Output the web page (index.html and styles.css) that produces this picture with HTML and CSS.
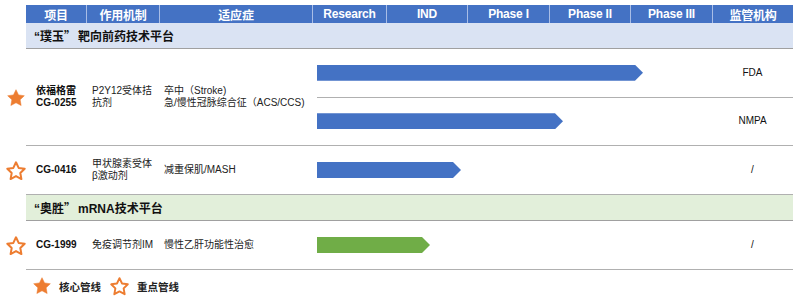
FILE: index.html
```html
<!DOCTYPE html>
<html lang="zh">
<head>
<meta charset="utf-8">
<link rel="stylesheet" href="styles.css">
</head>
<body>
<div class="sheet">
  <div class="head">
    <div class="hcell">项目</div>
    <div class="hcell">作用机制</div>
    <div class="hcell">适应症</div>
    <div class="hcell">Research</div>
    <div class="hcell">IND</div>
    <div class="hcell">Phase I</div>
    <div class="hcell">Phase II</div>
    <div class="hcell">Phase III</div>
    <div class="hcell">监管机构</div>
  </div>

  <div class="platform platform-blue">“璞玉<span class="cjk-quote">”</span>靶向前药技术平台</div>

  <div class="product product-tall">
    <div class="gutter">
      <svg class="star star-filled" width="20" height="20" viewBox="0 0 24 24"><polygon points="12,2 15.09,8.26 22,9.27 17,14.14 18.18,21.02 12,17.77 5.82,21.02 7,14.14 2,9.27 8.91,8.26"/></svg>
    </div>
    <div class="cells">
      <div class="name">依福格雷<br>CG-0255</div>
      <div class="mech">P2Y12受体拮<br>抗剂</div>
      <div class="ind">卒中（Stroke)<br>急/慢性冠脉综合征（ACS/CCS)</div>
      <div class="tracks">
        <div class="track">
          <div class="lane"><div class="bar bar-blue" style="width:326px"></div></div>
          <div class="reg">FDA</div>
        </div>
        <div class="track">
          <div class="lane"><div class="bar bar-blue" style="width:246px"></div></div>
          <div class="reg">NMPA</div>
        </div>
      </div>
    </div>
  </div>

  <div class="product">
    <div class="gutter">
      <svg class="star star-outline" width="22" height="22" viewBox="0 0 24 24"><polygon points="12,2.5 14.9,8.6 21.5,9.5 16.7,14.2 17.9,20.8 12,17.6 6.1,20.8 7.3,14.2 2.5,9.5 9.1,8.6"/></svg>
    </div>
    <div class="cells">
      <div class="name">CG-0416</div>
      <div class="mech">甲状腺素受体<br>β激动剂</div>
      <div class="ind">减重保肌/MASH</div>
      <div class="tracks">
        <div class="track">
          <div class="lane"><div class="bar bar-blue" style="width:144px"></div></div>
          <div class="reg">/</div>
        </div>
      </div>
    </div>
  </div>

  <div class="platform platform-green">“奥胜<span class="cjk-quote">”</span>mRNA技术平台</div>

  <div class="product">
    <div class="gutter">
      <svg class="star star-outline" width="22" height="22" viewBox="0 0 24 24"><polygon points="12,2.5 14.9,8.6 21.5,9.5 16.7,14.2 17.9,20.8 12,17.6 6.1,20.8 7.3,14.2 2.5,9.5 9.1,8.6"/></svg>
    </div>
    <div class="cells">
      <div class="name">CG-1999</div>
      <div class="mech">免疫调节剂IM</div>
      <div class="ind">慢性乙肝功能性治愈</div>
      <div class="tracks">
        <div class="track">
          <div class="lane"><div class="bar bar-green" style="width:113px"></div></div>
          <div class="reg">/</div>
        </div>
      </div>
    </div>
  </div>

  <div class="legend">
    <svg class="star star-filled" width="20" height="20" viewBox="0 0 24 24"><polygon points="12,2 15.09,8.26 22,9.27 17,14.14 18.18,21.02 12,17.77 5.82,21.02 7,14.14 2,9.27 8.91,8.26"/></svg>
    <span class="legend-text">核心管线</span>
    <svg class="star star-outline" width="21" height="21" viewBox="0 0 24 24"><polygon points="12,2.5 14.9,8.6 21.5,9.5 16.7,14.2 17.9,20.8 12,17.6 6.1,20.8 7.3,14.2 2.5,9.5 9.1,8.6"/></svg>
    <span class="legend-text">重点管线</span>
  </div>
</div>
</body>
</html>
```

FILE: styles.css
```css
* { box-sizing: border-box; }

html, body {
  margin: 0;
  padding: 0;
  background: #ffffff;
}

body {
  font-family: "Liberation Sans", Arial, "Noto Sans CJK SC", sans-serif;
  color: #111111;
  width: 800px;
  height: 303px;
  overflow: hidden;
}

.sheet {
  width: 793px;
  padding-top: 5px;
}

.head {
  margin-left: 26px;
  height: 18px;
  display: grid;
  grid-template-columns: 60px 73px 153px 74px 81px 82px 81px 82px 81px;
  background: #4472c4;
}

.hcell {
  color: #ffffff;
  font-weight: bold;
  font-size: 12px;
  display: flex;
  align-items: center;
  justify-content: center;
  border-left: 1px solid #a9bde6;
  letter-spacing: -0.2px;
}

.hcell:first-child { border-left: none; }

.platform {
  margin-left: 26px;
  height: 26px;
  display: flex;
  align-items: center;
  padding-left: 8px;
  font-size: 12px;
  font-weight: bold;
  color: #111111;
  border-bottom: 1px solid #a0a0a0;
}

.cjk-quote {
  font-family: "Noto Sans CJK SC", sans-serif;
  margin-right: 2px;
}

.platform-blue { background: #dae3f3; }
.platform-green { background: #e2efda; }

.product {
  display: flex;
  height: 49px;
}

.product-tall { height: 97px; }

.gutter {
  width: 26px;
  flex: none;
  display: flex;
  align-items: center;
  justify-content: center;
  padding-left: 5px;
}

.cells {
  flex: 1;
  display: grid;
  grid-template-columns: 60px 73px 153px 481px;
  border-bottom: 1px solid #b0b0b0;
  font-size: 10px;
  line-height: 12px;
}

.name {
  align-self: center;
  padding-left: 10px;
  font-weight: bold;
}

.mech {
  align-self: center;
  padding-left: 6px;
  color: #222222;
}

.ind {
  align-self: center;
  padding-left: 5px;
  color: #222222;
}

.tracks {
  display: flex;
  flex-direction: column;
  padding-left: 5px;
}

.track {
  flex: 1;
  display: grid;
  grid-template-columns: 395px 81px;
  align-items: center;
}

.track + .track { border-top: 1px solid #b0b0b0; }

.lane { display: flex; align-items: center; }

.bar {
  height: 16px;
  clip-path: polygon(0 0, calc(100% - 8px) 0, 100% 50%, calc(100% - 8px) 100%, 0 100%);
}

.bar-blue { background: #4472c4; }
.bar-green { background: #70ad47; }

.reg {
  text-align: center;
  font-size: 10px;
  color: #111111;
}

.star { display: block; flex: none; }

.star-filled polygon {
  fill: #ed7d31;
  stroke: #ed7d31;
  stroke-width: 0.6;
  stroke-linejoin: round;
}

.star-outline polygon {
  fill: none;
  stroke: #ed7d31;
  stroke-width: 2.2;
  stroke-linejoin: round;
}

.legend {
  height: 32px;
  display: flex;
  align-items: center;
  padding-left: 32px;
}

.legend-text {
  font-size: 10.5px;
  font-weight: bold;
  color: #222222;
  margin-left: 7px;
  margin-right: 8px;
}
```
